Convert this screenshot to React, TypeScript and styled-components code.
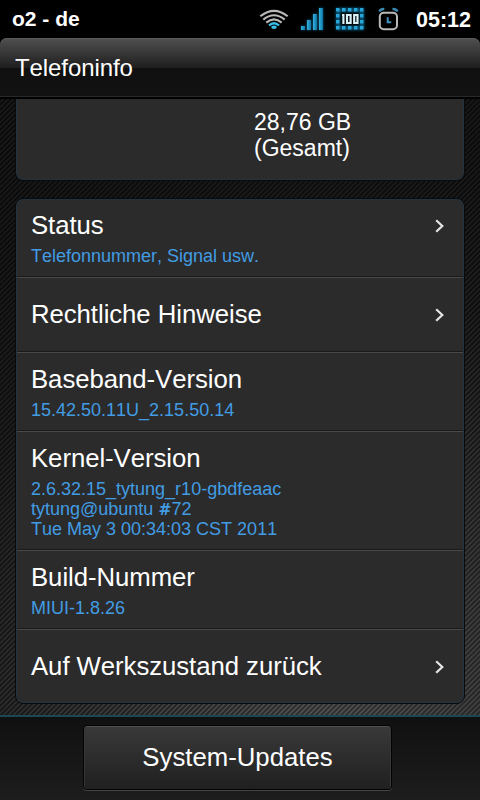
import React from "react";
import styled, { createGlobalStyle } from "styled-components";

const Global = createGlobalStyle`
  * { box-sizing: border-box; }
  body { margin: 0; background: #000; }
`;

const Screen = styled.div`
  width: 480px;
  height: 800px;
  display: flex;
  flex-direction: column;
  overflow: hidden;
  background: #000;
  color: #fff;
  font-family: "Liberation Sans", Arial, sans-serif;
  font-kerning: none;
`;

const StatusBar = styled.header`
  height: 38px;
  flex: none;
  display: flex;
  align-items: center;
  padding: 0 9px 0 12px;
  font-weight: bold;
  font-size: 21px;
  line-height: 38px;
`;

const Carrier = styled.span`
  flex: 1;
`;

const Clock = styled.time`
  width: 55px;
  margin-left: 14px;
  font-size: 21.5px;
  padding-top: 1px;
`;

const StatusIcons = styled.svg`
  flex: none;
`;

const TitleBar = styled.div`
  height: 61px;
  flex: none;
  padding-left: 15px;
  font-size: 24px;
  letter-spacing: -0.08px;
  line-height: 60px;
  border-radius: 7px 7px 0 0;
  border-bottom: 2px solid #020202;
  box-shadow: inset 0 1px #5a5a5a, inset 0 -1px #292929;
  background: linear-gradient(#505050, #1e1e1e 30px, #101010 30px, #121212);
`;

const Content = styled.main`
  height: 616px;
  flex: none;
  padding: 0 15px;
  background:
    repeating-linear-gradient(135deg, rgba(0, 0, 0, 0.36) 0 1.5px, rgba(255, 255, 255, 0.03) 2.1px 3px, rgba(0, 0, 0, 0.36) 3.54px),
    radial-gradient(ellipse 560px 620px at 68% 106%, #505050, #383838 35%, #191919 75%, #121212);
`;

const Card = styled.section<{ $cut?: boolean }>`
  border: 1px solid #080a0c;
  border-top-width: ${(p) => (p.$cut ? 0 : 1)}px;
  border-radius: ${(p) => (p.$cut ? "0 0 8px 8px" : "8px")};
  background: #2b2b2b;
  box-shadow: inset 0 0 0 1px #233340;
  overflow: hidden;
`;

const StorageCard = styled(Card)`
  height: 82px;
  padding: 10px 0 0 238px;
  font-size: 23px;
  line-height: 26px;
  margin-bottom: 17px;
  box-shadow: inset 1px -1px #233340, inset -1px 0 #233340;
`;

const Row = styled.div<{ $height: number }>`
  height: ${(p) => p.$height}px;
  display: flex;
  align-items: center;
  margin: 0 1px;
  padding: 0 18px 0 14px;
  border-bottom: 1px solid #484848;
  box-shadow: inset 0 -1px #1a1a1a;
  &:last-child {
    border-bottom: 0;
    box-shadow: none;
  }
`;

const Labels = styled.div<{ $sub?: boolean }>`
  flex: 1;
  align-self: ${(p) => (p.$sub ? "flex-start" : "center")};
  padding-top: ${(p) => (p.$sub ? 11 : 0)}px;
  padding-bottom: ${(p) => (p.$sub ? 0 : 2)}px;
`;

const Label = styled.div`
  font-size: 25.75px;
  letter-spacing: -0.06px;
  line-height: 30px;
`;

const Detail = styled.div`
  padding-top: 6px;
  color: #429ce3;
  font-size: 18px;
  line-height: 20px;
`;

const Line = styled.div`
  height: 20px;
  white-space: nowrap;
`;

const Hash = styled.span`
  font: bold 15.5px/20px "DejaVu Sans", sans-serif;
`;

const Footer = styled.footer`
  height: 85px;
  flex: none;
  display: flex;
  justify-content: center;
  align-items: flex-start;
  padding: 10px 5px 0 0;
  border-top: 2px solid #1b4854;
  background: linear-gradient(#101010, #1d1d1d);
`;

const UpdateButton = styled.button`
  width: 309px;
  height: 65px;
  margin-top: -2px;
  border: 1px solid #030303;
  border-radius: 4px;
  padding: 0 0 2px;
  color: #fff;
  font: 25.75px/60px "Liberation Sans", Arial, sans-serif;
  font-kerning: none;
  background: linear-gradient(#393939, #202020);
  box-shadow: inset 0 1px #505050, inset 1px 0 #373737, inset -1px 0 #373737, 0 1px #454545;
`;

const Chevron = () => (
  <svg width="11" height="16" viewBox="0 0 11 16" fill="none">
    <path d="M2.2 2.2 8.3 8 2.2 13.8" stroke="#e5e5e5" strokeWidth="2.2" />
  </svg>
);

const batteryDots = [
  ...[0, 1, 2, 3, 4].flatMap((i) => [
    [78 + i * 6, 8],
    [78 + i * 6, 26],
  ]),
  [78, 14],
  [78, 20],
  [102, 14],
  [102, 20],
];

const Indicators = () => (
  <StatusIcons width="144" height="38" viewBox="0 0 144 38" fill="none">
    <defs>
      <filter id="glow" x="-20%" y="-20%" width="140%" height="140%">
        <feGaussianBlur stdDeviation="1.5" />
      </filter>
      <linearGradient id="blue" x1="0" y1="0" x2="1" y2="0">
        <stop stopColor="#35b4e2" />
        <stop offset="1" stopColor="#0c729e" />
      </linearGradient>
    </defs>
    <g stroke="#b9b9b9" strokeWidth="2.1">
      <path d="M2.3 16.3Q16 5.5 29.7 16.3" />
      <path d="M5.3 19.6Q16 10.9 26.7 19.6" />
      <path d="M8.3 22.6Q16 16 23.7 22.6" />
    </g>
    <path d="M11 25.5Q16 20.8 21 25.5" stroke="#39bee8" strokeWidth="2.4" />
    <ellipse cx="16" cy="27.3" rx="2.8" ry="1.8" fill="#39bee8" />
    <g fill="#087cab" filter="url(#glow)" opacity=".75">
      <path d="M43 26h4v4h-4zM49 20h4v10h-4zM55 14h4v16h-4zM61 8h4v22h-4z" />
      <path d="M78 8h28v4H78zM78 26h28v4H78zM78 12h4v14h-4zM102 12h4v14h-4z" />
    </g>
    {[[43, 26], [49, 20], [55, 14], [61, 8]].map(([x, y]) => (
      <rect key={x} x={x} y={y} width="4" height={30 - y} fill="url(#blue)" />
    ))}
    {batteryDots.map(([x, y]) => (
      <rect key={`${x}-${y}`} x={x} y={y} width="3.5" height="3.5" fill="#25a5d8" />
    ))}
    <path
      d="M84 15h1.4v9M89 15h3.6v8h-3.6zM96.2 15h3.3v8h-3.3z"
      stroke="#d8f1f7"
      strokeWidth="2.2"
    />
    <rect x="121.8" y="12.8" width="17.2" height="16.4" rx="4" stroke="#b8b8b8" strokeWidth="2" />
    <path d="M121.3 11.5q1.5-2.7 5-2.4M139.5 11.5q-1.5-2.7-5-2.4" stroke="#3988b1" strokeWidth="2.4" />
    <path d="M129.7 17.3v5h3.5" stroke="#4293bd" strokeWidth="2" />
  </StatusIcons>
);

const rows: { label: string; detail?: React.ReactNode[]; height: number; arrow?: boolean }[] = [
  { label: "Status", detail: ["Telefonnummer, Signal usw."], height: 79, arrow: true },
  { label: "Rechtliche Hinweise", height: 75, arrow: true },
  { label: "Baseband-Version", detail: ["15.42.50.11U_2.15.50.14"], height: 79 },
  {
    label: "Kernel-Version",
    detail: [
      "2.6.32.15_tytung_r10-gbdfeaac",
      <>
        tytung@ubuntu <Hash>#</Hash>72
      </>,
      "Tue May 3 00:34:03 CST 2011",
    ],
    height: 119,
  },
  { label: "Build-Nummer", detail: ["MIUI-1.8.26"], height: 79 },
  { label: "Auf Werkszustand zurück", height: 73, arrow: true },
];

const ArrowSlot = styled.span<{ $raised?: boolean }>`
  display: flex;
  padding-bottom: ${(p) => (p.$raised ? 25 : 0)}px;
`;

export default function App() {
  return (
    <Screen>
      <Global />
      <StatusBar>
        <Carrier>o2 - de</Carrier>
        <Indicators />
        <Clock>05:12</Clock>
      </StatusBar>
      <TitleBar>Telefoninfo</TitleBar>
      <Content>
        <StorageCard $cut>
          28,76 GB
          <br />
          (Gesamt)
        </StorageCard>
        <Card>
          {rows.map((row) => (
            <Row key={row.label} $height={row.height}>
              <Labels $sub={!!row.detail}>
                <Label>{row.label}</Label>
                {row.detail && (
                  <Detail>
                    {row.detail.map((line, i) => (
                      <Line key={i}>{line}</Line>
                    ))}
                  </Detail>
                )}
              </Labels>
              {row.arrow && (
                <ArrowSlot $raised={!!row.detail}>
                  <Chevron />
                </ArrowSlot>
              )}
            </Row>
          ))}
        </Card>
      </Content>
      <Footer>
        <UpdateButton>System-Updates</UpdateButton>
      </Footer>
    </Screen>
  );
}
